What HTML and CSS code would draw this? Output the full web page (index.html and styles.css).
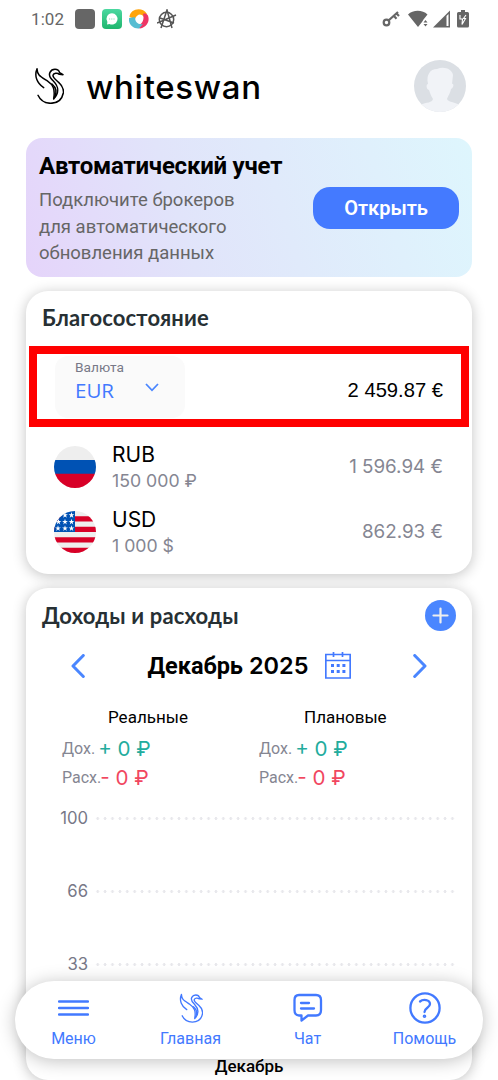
FILE: index.html
```html
<!DOCTYPE html>
<html lang="ru">
<head>
<meta charset="utf-8">
<title>whiteswan</title>
<link rel="stylesheet" href="styles.css">
</head>
<body>
<svg class="defs" width="0" height="0">
  <symbol id="swan" viewBox="0 0 90 112">
    <path d="M29 62C9 49 0 27 9 5C10 24 17 27 40 42C58 54 64 66 59 96C77 76 75 60 58 42C48 33 43 26 48 16C54 4 73 4 77 17L87 23L76 22C70 17 59 18 57 25C56 32 64 37 74 46C85 56 90 66 88 78C84 98 70 109 50 109C32 109 18 98 12 85"/>
    <path d="M61 91C70 76 68 63 54 51"/>
  </symbol>
</svg>
<div class="screen">
  <div class="status">
    <span class="time">1:02</span>
    <i class="app app-gray"></i>
    <i class="app app-chat"><svg width="20" height="20" viewBox="0 0 20 20"><path d="M10 4.300a5.600 5.600 0 1 1-2.600 10.600L5 15.500l.4-2.500A5.600 5.600 0 0 1 10 4.300" fill="#fff"/><path d="M7 10h6" stroke="#8bdcb4" stroke-dasharray="1.200 1"/></svg></i>
    <svg class="swirl" width="20" height="20" viewBox="0 0 20 20"><path d="M.5 8C1 0 13-3 18 5L15 8C12 4 8 5 6 10Z" fill="#ffa40a"/><path d="M14 5C21 2 23 17 11 19.500L5 17C12 17 16 12 14 5Z" fill="#ee3565"/><path d="M0 9L6 8C6 13 9 16 14 15L10 19.500C4 20-1 15 0 9Z" fill="#57bdd2"/></svg>
    <svg class="anarchy" width="20" height="20" viewBox="0 0 20 20" fill="none" stroke="#555" stroke-width="1.500"><circle cx="9.500" cy="10.500" r="7.200"/><path d="M4 19L10 1L15 19M0 14L19 6M3 9L17 14"/></svg>
    <span class="grow"></span>
    <svg class="key" width="19" height="18" viewBox="0 0 19 18" fill="none" stroke="#666"><circle cx="4.500" cy="12.500" r="2.800" stroke-width="2.200"/><path d="M6.500 10.500L16 2M12 6L14.500 8.700M14.500 3.500L17 6" stroke-width="2.200"/></svg>
    <svg class="wifi" width="20" height="18" viewBox="0 0 20 18" fill="#666"><path d="M0 4.500C5-.5 14.500-.5 19.500 4.500L15.500 9.500L14 12L10 17ZM15.500 12.500L17.500 10L19.500 12.500ZM15.500 14L17.500 16.500L19.500 14Z"/></svg>
    <svg class="signal" width="17" height="18" viewBox="0 0 17 18"><path d="M0 17.500L17 .5V17.500Z" fill="#666"/><path d="M13.500 6L15.500 4V16H13.500Z" fill="#fff"/></svg>
    <svg class="battery" width="12" height="18" viewBox="0 0 12 18"><path d="M4 0H8V2H10.500Q12 2 12 3.500V16Q12 17.500 10.500 17.500H1.500Q0 17.500 0 16V3.500Q0 2 1.500 2H4Z" fill="#666"/><path d="M3 5V9H5.500L5 14.500L8.500 8.500H6.500L9 5" fill="none" stroke="#fff" stroke-width="1.100"/></svg>
  </div>

  <header class="header">
    <svg class="swan-logo" width="30" height="37.300"><use href="#swan"/></svg>
    <span class="brand">whiteswan</span>
    <span class="grow"></span>
    <svg class="avatar" width="52" height="52" viewBox="0 0 52 52"><defs><clipPath id="round"><circle cx="26" cy="26" r="26"/></clipPath></defs><g clip-path="url(#round)"><path d="M0 0H52V52H0Z" fill="#dbdfe4"/><path d="M14 24C12 15 16 9 23 9C30 6 38 9 39 15L38 24C40 23 40 28 37 29C36 34 34 36 33 39C34 42 40 42 46 45V52H6V45C13 42 18 43 19 39C17 36 16 33 15 30C12 29 12 24 14 24" fill="#f1f3f7"/></g></svg>
  </header>

  <section class="banner">
    <div class="banner-copy">
      <h2>Автоматический учет</h2>
      <p>Подключите брокеров<br>для автоматического<br>обновления данных</p>
    </div>
    <button class="open">Открыть</button>
  </section>

  <section class="card wealth">
    <h3>Благосостояние</h3>
    <div class="total">
      <div class="select">
        <span class="select-label">Валюта</span>
        <span class="select-value">EUR</span>
        <svg class="chevron" width="14" height="9" viewBox="0 0 14 9"><path d="M1 1L7 7.300L13 1" fill="none" stroke="#4a86ff" stroke-width="1.800"/></svg>
      </div>
      <span class="total-sum">2 459.87 €</span>
    </div>
    <div class="asset">
      <svg class="flag" width="42" height="42" viewBox="0 0 42 42"><defs><clipPath id="flag"><circle cx="21" cy="21" r="21"/></clipPath></defs><g clip-path="url(#flag)"><path d="M0 0H42V42H0Z" fill="#eee"/><path d="M0 14H42V28H0Z" fill="#0052b4"/><path d="M0 27.700H42V42H0Z" fill="#d80027"/></g></svg>
      <div class="asset-name"><b>RUB</b><span>150 000 ₽</span></div>
      <span class="asset-sum">1 596.94 €</span>
    </div>
    <div class="asset">
      <svg class="flag" width="42" height="42" viewBox="0 0 42 42"><g clip-path="url(#flag)"><path d="M0 0H42V42H0Z" fill="#eee"/><path d="M0 5.200H42V10.500H0ZM0 15.700H42V21H0ZM0 26.200H42V31.500H0ZM0 36.700H42V42H0Z" fill="#d80027"/><path d="M0 0H21V21H0Z" fill="#0052b4"/><g fill="#fff"><path id="star" d="M17.500 1L18.200 3.200H20.400L18.600 4.500L19.300 6.700L17.500 5.400L15.700 6.700L16.400 4.500L14.600 3.200H16.800Z"/><use href="#star" x="-6.500"/><use href="#star" y="6.700"/><use href="#star" x="-6.500" y="6.700"/><use href="#star" x="-13" y="6.700"/><use href="#star" y="13.200"/><use href="#star" x="-6.500" y="13.200"/><use href="#star" x="-13.500" y="13.200"/></g></g></svg>
      <div class="asset-name"><b>USD</b><span class="usd">1 000 $</span></div>
      <span class="asset-sum usd-sum">862.93 €</span>
    </div>
  </section>

  <section class="card flow">
    <div class="flow-head">
      <h3>Доходы и расходы</h3>
      <svg class="add" width="31" height="31" viewBox="0 0 31 31"><circle cx="15.500" cy="15.500" r="15.500" fill="#4a86ff"/><path d="M8.500 15.500H22.500M15.500 8.500V22.500" stroke="#eee" stroke-width="2.200" stroke-linecap="round"/></svg>
    </div>
    <div class="month">
      <svg width="14" height="24" viewBox="0 0 14 24"><path d="M12.300 1.500L2 12L12.300 22.500" fill="none" stroke="#4a86ff" stroke-width="3" stroke-linecap="round" stroke-linejoin="round"/></svg>
      <div class="month-name"><span>Декабрь</span> <span class="year">2025</span>
        <svg width="26" height="27" viewBox="0 0 26 27" fill="none" stroke="#4279ff"><path d="M.8 2.500H25.200V26H.8ZM.8 8.500H25.200M8.500 0V5M17.500 0V5" stroke-width="1.700"/><path d="M6 13.500H20.500M6 19.500H20.500" stroke-width="3" stroke-dasharray="3 2.700"/></svg>
      </div>
      <svg width="14" height="24" viewBox="0 0 14 24"><path d="M1.700 1.500L12 12L1.700 22.500" fill="none" stroke="#4a86ff" stroke-width="3" stroke-linecap="round" stroke-linejoin="round"/></svg>
    </div>
    <div class="stats">
      <div class="stat"><h4>Реальные</h4>
        <p class="in"><span>Дох.</span><b>+ 0 ₽</b></p>
        <p class="out"><span>Расх.</span><b>- 0 ₽</b></p></div>
      <div class="stat"><h4>Плановые</h4>
        <p class="in"><span>Дох.</span><b>+ 0 ₽</b></p>
        <p class="out"><span>Расх.</span><b>- 0 ₽</b></p></div>
    </div>
    <div class="chart">
      <div class="tick"><span>100</span><i></i></div>
      <div class="tick"><span>66</span><i></i></div>
      <div class="tick"><span>33</span><i></i></div>
    </div>
    <div class="chart-month">Декабрь</div>
  </section>

  <nav class="nav">
    <a class="menu"><svg width="31" height="32" viewBox="0 0 31 32"><path d="M1 9.500H30M1 16H30M1 22.500H30" stroke-width="2.500" stroke-linecap="round"/></svg><span>Меню</span></a>
    <a class="home"><svg class="nav-swan" width="24" height="32"><use href="#swan"/></svg><span>Главная</span></a>
    <a class="chat"><svg width="31" height="32" viewBox="0 0 31 32"><path d="M7 3H24Q29 3 29 8V18Q29 23.500 24 23.500H16L9.500 28.500V23.500H7Q2.500 23.500 2.500 18V8Q2.500 3 7 3ZM9 11H17M9 16.500H22" stroke-width="2.300" stroke-linecap="round" stroke-linejoin="round"/></svg><span>Чат</span></a>
    <a class="help"><svg width="32" height="32" viewBox="0 0 32 32"><circle cx="16" cy="16" r="14.600" stroke-width="2.300"/><path d="M11 9.500C14 7 21 7.500 21 12C21 16 15.500 15.500 15.500 20" stroke-width="2.300" stroke-linecap="round"/><circle cx="15.500" cy="24.300" r=".8" stroke-width="2"/></svg><span>Помощь</span></a>
  </nav>
</div>
</body>
</html>
```
FILE: styles.css
```css
* { box-sizing: border-box; }
body { margin: 0; background: #fff; font-family: Roboto, sans-serif; color: #000; }
h2, h3, h4, p { margin: 0; }
svg { display: block; flex: none; }
.defs { position: absolute; }
.grow { flex: 1; }
.screen { width: 498px; height: 1080px; overflow: hidden; display: flex; flex-direction: column; position: relative; }

.status { height: 37px; flex: none; display: flex; align-items: center; padding: 0 29px 0 31px; }
.time { font-size: 17px; letter-spacing: .1px; color: #666; width: 44px; }
.app { width: 20px; height: 20px; border-radius: 4px; margin-right: 7px; }
.app-gray { background: #666; }
.app-chat { background: linear-gradient(#4bd8a0, #20b66e); }
.swirl { margin-right: 8px; }
.key { margin-right: 7px; }
.wifi { margin-right: 5px; }
.signal { margin-right: 7px; }

.header { height: 101px; flex: none; display: flex; align-items: center; padding: 0 32px 4px 34px; }
.swan-logo { fill: none; stroke: #000; stroke-width: 4.500; stroke-linejoin: round; stroke-linecap: round; }
.brand { font: 500 33px/40px Inter, sans-serif; letter-spacing: .7px; margin-left: 22px; padding-top: 2px; }

.banner { height: 139px; flex: none; margin: 0 26px; border-radius: 16px; padding: 12px 13px; background: linear-gradient(73deg, #e5d4fa, #e1e4fa 35%, #def6fd); display: flex; justify-content: space-between; align-items: center; }
.banner-copy { align-self: flex-start; }
.banner h2 { font-size: 24px; line-height: 32px; font-weight: 700; letter-spacing: -.23px; white-space: nowrap; }
.banner p { font-size: 18.500px; line-height: 26.500px; color: #666; margin-top: 5px; white-space: nowrap; }
.open { width: 146px; height: 42px; border: 0; border-radius: 17px; background: #447aff; color: #fff; font: 600 20px Roboto, sans-serif; padding: 0; flex: none; }

.card { background: #fff; margin: 14px 26px 0; border-radius: 22px; box-shadow: 0 2px 14px rgba(0, 0, 0, .24); flex: none; }
.card h3 { font: 700 22px/30px Lato, "Open Sans", sans-serif; letter-spacing: .15px; color: #273034; }
.wealth { height: 283px; }
.wealth h3 { padding: 12px 16px 0; height: 55px; }
.total { height: 81px; border: 8px solid #f00; margin: 0 3px; display: flex; justify-content: space-between; align-items: center; padding: 0 18px; }
.select { width: 130px; height: 62px; background: #fafafa; border-radius: 13px; display: grid; grid-template-columns: 76px 14px; grid-template-rows: 20px 26px; padding: 1px 20px; align-items: center; }
.select-label { grid-column: 1 / 3; font-size: 13.700px; line-height: 18px; color: #777887; }
.select-value { font: 400 20.500px/26px "Open Sans", sans-serif; color: #4279ff; }
.chevron { margin-left: -6px; margin-top: -4px; }
.total-sum { font: 20.200px "Liberation Sans", sans-serif; padding-top: 8px; }
.asset { height: 65px; padding: 0 29px 0 28px; display: flex; align-items: center; }
.total + .asset { margin-top: 7px; }
.asset-name { flex: 1; margin-left: 16px; display: flex; flex-direction: column; padding-top: 1px; }
.asset-name b { font: 400 21px/26px Inter, sans-serif; }
.asset-name span { font: 400 17.700px/25px Inter, sans-serif; color: #858692; }
.asset-sum { font: 400 18.800px/24px Inter, sans-serif; color: #858692; }

.flow { height: 492px; border-radius: 22px; }
.flow-head { height: 55px; padding: 0 16px; display: flex; align-items: center; justify-content: space-between; }
.month { height: 45px; display: flex; align-items: center; justify-content: space-between; padding: 0 45px; }
.month-name { display: flex; align-items: center; font: 700 23.500px Roboto, sans-serif; margin-left: 1px; }
.year { font: 600 23.500px Inter, sans-serif; margin-left: 6px; }
.month-name svg { margin-left: 17px; }
.stats { display: grid; grid-template-columns: 197px 1fr; padding: 16px 0 0 36px; height: 114px; }
.stat h4 { font-size: 17px; font-weight: 400; line-height: 26px; padding-left: 46px; }
.stat:last-child h4 { padding-left: 45px; }
.stat p { display: flex; align-items: center; height: 30px; }
.stat p + p { height: 29px; }
.stat p span { font-size: 16px; color: #858692; }
.stat b { font: 400 20.600px Inter, sans-serif; margin-left: 3px; }
.in { padding-top: 7px; }
.in b { color: #23ac9d; }
.out b { color: #f1475f; margin-left: 0; }
.stat .out b { margin-left: -1px; }
.out { padding-top: 5px; }
.chart { height: 180px; padding: 4px 15px 0 0; display: flex; flex-direction: column; gap: 49px; }
.tick { display: flex; align-items: center; height: 24px; }
.tick span { width: 62px; text-align: right; font: 16.700px Inter, sans-serif; color: #777887; }
.tick i { height: 3px; flex: 1; margin-left: 6px; background: radial-gradient(circle, #e8e8ec 1.200px, transparent 1.600px) 0 0 / 7.400px 3px; }
.chart-month { font-size: 17px; font-weight: 500; line-height: 22px; text-align: center; margin-top: 73px; }

.nav { position: absolute; left: 15px; top: 981px; width: 468px; height: 78px; background: #fff; border-radius: 39px; box-shadow: 0 2px 18px rgba(0, 0, 0, .25); display: grid; grid-template-columns: repeat(4, 117px); }
.nav a { display: flex; flex-direction: column; align-items: center; padding-top: 11px; color: #4279ff; font-size: 16px; line-height: 29px; }
.nav svg { fill: none; stroke: #4279ff; }
.nav .nav-swan { stroke-width: 5; stroke-linejoin: round; stroke-linecap: round; }
```
